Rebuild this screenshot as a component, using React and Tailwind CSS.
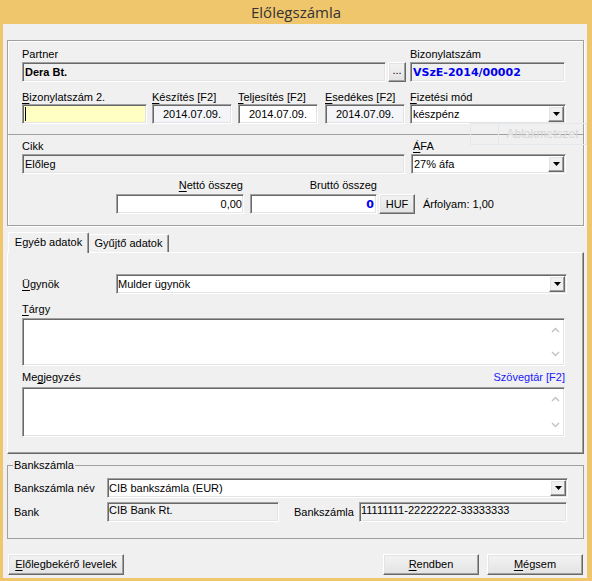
import React from "react";

// klasszikus 3D keretek
const sunken =
    "border border-t-[#a0a0a0] border-l-[#a0a0a0] border-r-white border-b-white shadow-[inset_1px_1px_0_#696969,inset_-1px_-1px_0_#e3e3e3]";
const raised =
    "border border-t-white border-l-white border-r-[#696969] border-b-[#696969] shadow-[inset_-1px_-1px_0_#a0a0a0,inset_1px_1px_0_#e3e3e3]";

function Label({ children, className = "" }) {
    return (
        <div className={`h-[13px] leading-[13px] whitespace-nowrap ${className}`}>
            {children}
        </div>
    );
}

function U({ children }) {
    return <span className="underline underline-offset-[2px]">{children}</span>;
}

function Field({ className = "", children }) {
    return (
        <div
            className={`${sunken} h-[20px] flex items-center px-[2px] overflow-hidden whitespace-nowrap ${className}`}
        >
            {children}
        </div>
    );
}

function DropArrow() {
    return (
        <div
            className={`${raised} w-[16px] h-[16px] mr-[1px] bg-[#f0f0f0] flex items-center justify-center shrink-0`}
        >
            <svg width="7" height="4" viewBox="0 0 7 4">
                <path d="M0 0h7L3.5 4z" fill="#000" />
            </svg>
        </div>
    );
}

function Combo({ className = "", value }) {
    return (
        <div className={`${sunken} h-[20px] bg-white flex items-center pl-[2px] ${className}`}>
            <span className="flex-1 whitespace-nowrap overflow-hidden">{value}</span>
            <DropArrow />
        </div>
    );
}

function Memo({ className = "" }) {
    return (
        <div className={`${sunken} bg-white w-[543px] flex justify-end ${className}`}>
            <div className="w-[17px] flex flex-col justify-between items-center py-[8px]">
                <svg width="9" height="6" viewBox="0 0 9 6">
                    <path d="M1 5 4.5 1.5 8 5" stroke="#c4c4c4" strokeWidth="1.5" fill="none" />
                </svg>
                <svg width="9" height="6" viewBox="0 0 9 6">
                    <path d="M1 1 4.5 4.5 8 1" stroke="#c4c4c4" strokeWidth="1.5" fill="none" />
                </svg>
            </div>
        </div>
    );
}

function Button({ className = "", children }) {
    return (
        <button
            className={`${raised} h-[21px] bg-linear-to-b from-[#f3f3f3] to-[#e3e3e3] flex items-center justify-center whitespace-nowrap ${className}`}
        >
            {children}
        </button>
    );
}

export default function App() {
    return (
        <div className="w-[592px] h-[581px] bg-[#f0c66c] flex flex-col font-['Liberation_Sans',Arial,sans-serif] text-[11px] leading-[13px] text-black">
            {/* Címsor */}
            <div className="h-[24px] flex items-center justify-center text-[15px] text-[#333] font-['Open_Sans',sans-serif]">
                Előlegszámla
            </div>

            {/* Ablak tartalom */}
            <div className="flex-1 ml-[3px] mr-[5px] mb-[3px] bg-[#f0f0f0] relative flex flex-col">
                {/* Felső panel */}
                <div className="mt-[16px] ml-[4px] w-[577px] border border-[#a0a0a0] shadow-[inset_1px_1px_0_#fff,1px_1px_0_#fff]">
                    <div className="h-[94px] border-b border-[#a0a0a0] pt-[7px] pl-[14px]">
                        <div className="flex">
                            <div className="w-[384px]">
                                <Label>Partner</Label>
                                <div className="flex mt-[1px]">
                                    <Field className="w-[364px] bg-[#f0f0f0] font-bold">Dera Bt.</Field>
                                    <Button className="ml-[2px] w-[18px] !h-[20px] pb-[4px]">...</Button>
                                </div>
                            </div>
                            <div className="ml-[4px] w-[155px]">
                                <Label>Bizonylatszám</Label>
                                <Field className="mt-[1px] bg-[#f0f0f0] font-['DejaVu_Sans',sans-serif] font-bold text-[#0000ee]">
                                    VSzE-2014/00002
                                </Field>
                            </div>
                        </div>
                        <div className="flex mt-[9px]">
                            <div className="w-[125px]">
                                <Label>
                                    <U>B</U>izonylatszám 2.
                                </Label>
                                <Field className="bg-[#ffffc4]">
                                    <div className="w-[1px] h-[14px] bg-black" />
                                </Field>
                            </div>
                            <div className="ml-[5px] w-[80px]">
                                <Label>
                                    <U>K</U>észítés [F2]
                                </Label>
                                <Field className="bg-[#f3f5f9] justify-center">2014.07.09.</Field>
                            </div>
                            <div className="ml-[6px] w-[80px]">
                                <Label>
                                    <U>T</U>eljesítés [F2]
                                </Label>
                                <Field className="bg-white justify-center">2014.07.09.</Field>
                            </div>
                            <div className="ml-[7px] w-[80px]">
                                <Label>
                                    <U>E</U>sedékes [F2]
                                </Label>
                                <Field className="bg-[#f3f5f9] justify-center">2014.07.09.</Field>
                            </div>
                            <div className="ml-[5px] w-[156px]">
                                <Label>
                                    <U>F</U>izetési mód
                                </Label>
                                <Combo value="készpénz" />
                            </div>
                        </div>
                    </div>

                    <div className="h-[90px] pt-[5px] pl-[14px]">
                        <div className="flex">
                            <div className="w-[383px]">
                                <Label>Cikk</Label>
                                <Field className="mt-[1px] bg-[#f0f0f0]">Előleg</Field>
                            </div>
                            <div className="ml-[6px] w-[155px]">
                                <Label className="pl-[2px]">
                                    <U>Á</U>FA
                                </Label>
                                <Combo className="mt-[1px]" value="27% áfa" />
                            </div>
                        </div>
                        <div className="flex items-end mt-[5px]">
                            <div className="ml-[94px] w-[128px]">
                                <Label className="text-right pr-[1px]">
                                    <U>N</U>ettó összeg
                                </Label>
                                <Field className="mt-[2px] bg-white justify-end !pr-[1px]">0,00</Field>
                            </div>
                            <div className="ml-[6px] w-[127px]">
                                <Label className="text-right">Bruttó összeg</Label>
                                <Field className="mt-[2px] bg-white justify-end font-['DejaVu_Sans',sans-serif] font-bold text-[#0000ee]">
                                    0
                                </Field>
                            </div>
                            <Button className="ml-[2px] w-[36px] !h-[20px]">HUF</Button>
                            <div className="ml-[8px] h-[20px] flex items-center">Árfolyam: 1,00</div>
                        </div>
                    </div>
                </div>

                {/* Fülek */}
                <div className="mt-[6px] ml-[5px] h-[20px] flex items-end">
                    <div className="relative z-10 -mb-[1px] w-[81px] h-[21px] bg-[#f0f0f0] border-t border-l border-white border-r border-r-[#696969] rounded-t-[2px] shadow-[inset_-1px_0_0_#a0a0a0] flex items-center justify-center pb-[1px]">
                        Egyéb adatok
                    </div>
                    <div className="w-[80px] h-[18px] bg-[#f0f0f0] border-t border-white border-r border-r-[#696969] rounded-t-[2px] shadow-[inset_-1px_0_0_#a0a0a0] flex items-center justify-center">
                        Gyűjtő adatok
                    </div>
                </div>
                <div
                    className={`ml-[4px] w-[577px] h-[202px] ${raised} !shadow-[inset_-1px_-1px_0_#a0a0a0] pl-[14px]`}
                >
                    <div className="mt-[21px] flex items-center">
                        <div className="w-[94px]">
                            <U>Ü</U>gynök
                        </div>
                        <Combo className="w-[451px] !pl-[1px]" value="Mulder ügynök" />
                    </div>
                    <Label className="mt-[9px]">
                        <U>T</U>árgy
                    </Label>
                    <Memo className="mt-[2px] h-[48px]" />
                    <div className="mt-[5px] w-[543px] flex justify-between h-[13px]">
                        <span>
                            Me<U>g</U>jegyzés
                        </span>
                        <span className="text-[#1a1aff]">Szövegtár [F2]</span>
                    </div>
                    <Memo className="mt-[3px] h-[50px]" />
                </div>

                {/* Bankszámla */}
                <fieldset className="mt-[5px] ml-[4px] w-[577px] border border-[#a0a0a0] px-[6px] pb-[16px]">
                    <legend className="px-[1px] -ml-[1px] leading-[13px]">Bankszámla</legend>
                    <div className="mt-[6px] flex items-center">
                        <div className="w-[93px]">Bankszámla név</div>
                        <Combo className="w-[461px] !pl-[1px]" value="CIB bankszámla (EUR)" />
                    </div>
                    <div className="mt-[4px] flex items-center">
                        <div className="w-[93px]">Bank</div>
                        <Field className="w-[172px] bg-[#f0f0f0] !items-start pt-[1px] !px-[1px]">CIB Bank Rt.</Field>
                        <div className="ml-[15px] w-[65px]">Bankszámla</div>
                        <Field className="w-[208px] bg-[#f0f0f0] !items-start pt-[1px] !px-[1px]">
                            11111111-22222222-33333333
                        </Field>
                    </div>
                </fieldset>

                {/* Gombok */}
                <div className="mt-[15px] ml-[5px] mr-[4px] flex">
                    <Button className="w-[116px]">
                        <U>E</U>lőlegbekérő levelek
                    </Button>
                    <Button className="ml-auto w-[96px]">
                        <U>R</U>endben
                    </Button>
                    <Button className="ml-[8px] w-[96px]">
                        <U>M</U>égsem
                    </Button>
                </div>

                {/* Ablakmetszet vízjel */}
                <div className="absolute left-[467px] top-[99px] w-[117px] h-[22px] border border-[#e4e9ee] flex pointer-events-none">
                    <div className="w-[28px] border-r border-[#e4e9ee]" />
                    <div className="flex-1 flex items-center justify-center text-[12px] text-[#d6d6d6]">
                        Ablakmetszet
                    </div>
                </div>
            </div>
        </div>
    );
}
